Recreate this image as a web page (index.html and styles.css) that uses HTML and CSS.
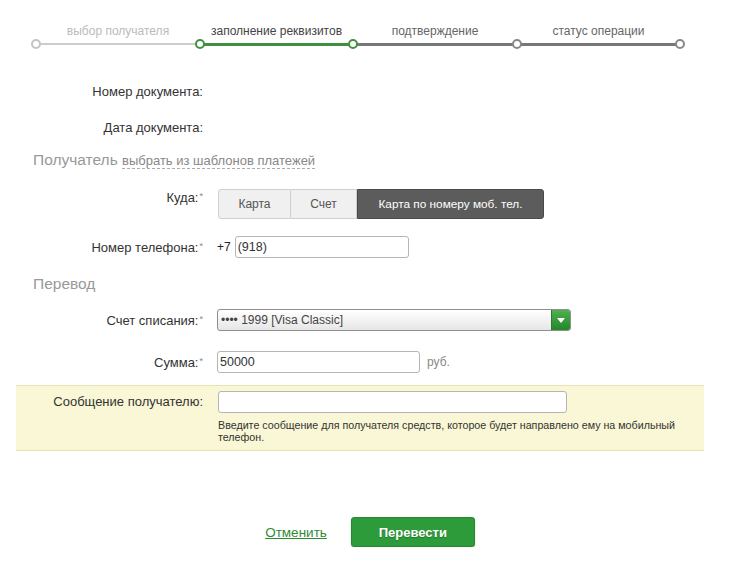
FILE: index.html
```html
<!DOCTYPE html>
<html lang="ru">
<head>
  <meta charset="UTF-8" />
  <title>Перевод по номеру телефона</title>
  <link rel="stylesheet" href="styles.css">
</head>
<body>
  <div class="steps">
    <div class="step done">
      <div class="step-name">выбор получателя</div>
      <div class="track"><span class="dot"></span></div>
    </div>
    <div class="step current">
      <div class="step-name">заполнение реквизитов</div>
      <div class="track"><span class="dot"></span></div>
    </div>
    <div class="step">
      <div class="step-name">подтверждение</div>
      <div class="track"><span class="dot green"></span></div>
    </div>
    <div class="step last">
      <div class="step-name">статус операции</div>
      <div class="track"><span class="dot"></span><span class="dot end"></span></div>
    </div>
  </div>

  <div class="form">
    <div class="row row-doc">
      <div class="label">Номер документа:</div>
    </div>
    <div class="row row-date">
      <div class="label">Дата документа:</div>
    </div>

    <div class="section section-recipient">
      Получатель <a class="templates" href="#">выбрать из шаблонов платежей</a>
    </div>

    <div class="row row-where">
      <div class="label">Куда:<sup>*</sup></div>
      <div class="field">
        <div class="switch">
          <span class="opt opt-card">Карта</span>
          <span class="opt opt-acc">Счет</span>
          <span class="opt opt-phone active">Карта по номеру моб. тел.</span>
        </div>
      </div>
    </div>

    <div class="row row-phone">
      <div class="label">Номер телефона:<sup>*</sup></div>
      <div class="field">
        <span class="prefix">+7</span>
        <div class="input input-phone">(918)</div>
      </div>
    </div>

    <div class="section section-transfer">Перевод</div>

    <div class="row row-account">
      <div class="label">Счет списания:<sup>*</sup></div>
      <div class="field">
        <div class="select">
          <span class="select-text">•••• 1999 [Visa Classic]</span>
          <span class="select-btn">
            <svg width="10" height="7" viewBox="0 0 10 7"><path d="M1 1h8L5 6z" fill="#fff"/></svg>
          </span>
        </div>
      </div>
    </div>

    <div class="row row-sum">
      <div class="label">Сумма:<sup>*</sup></div>
      <div class="field">
        <div class="input input-sum">50000</div>
        <span class="currency">руб.</span>
      </div>
    </div>

    <div class="message-box">
      <div class="row">
        <div class="label">Сообщение получателю:</div>
        <div class="field field-col">
          <div class="input input-msg"></div>
          <div class="hint">Введите сообщение для получателя средств, которое будет направлено ему на мобильный телефон.</div>
        </div>
      </div>
    </div>

    <div class="actions">
      <a class="cancel" href="#">Отменить</a>
      <button class="submit">Перевести</button>
    </div>
  </div>
</body>
</html>
```

FILE: styles.css
```css
body {
  margin: 0;
  padding: 0;
  font-family: 'Liberation Sans', Arial, sans-serif;
  font-size: 12px;
  color: #333;
  background: #fff;
}

/* progress */
.steps {
  display: grid;
  grid-template-columns: 164px 153px 164px 163px;
  margin-left: 36px;
  padding-top: 24px;
}

.step-name {
  height: 14px;
  line-height: 14px;
  text-align: center;
  color: #666;
  font-size: 12px;
}

.step.done .step-name {
  color: #bbb;
}

.step.current .step-name {
  color: #444;
}

.track {
  position: relative;
  height: 12px;
}

.track::before {
  content: "";
  position: absolute;
  left: 0;
  right: 0;
  top: 5px;
  height: 3px;
  background: #777;
}

.step.done .track::before {
  height: 2px;
  top: 5px;
  background: #ccc;
}

.step.current .track::before {
  background: #3f9140;
}

.dot {
  position: absolute;
  left: -5px;
  top: 1px;
  width: 6px;
  height: 6px;
  border: 2px solid #888;
  border-radius: 50%;
  background: #fff;
  z-index: 1;
}

.step.done .dot {
  border-color: #c4c4c4;
}

.step.current .dot,
.dot.green {
  border-color: #3f9140;
}

.dot.end {
  left: auto;
  right: -5px;
}

/* form */
.form {
  margin-top: 30px;
}

.row {
  display: flex;
  align-items: center;
  height: 22px;
}

.label {
  width: 203px;
  flex-shrink: 0;
  text-align: right;
  color: #333;
  font-size: 13px;
}

.label sup {
  font-size: 9px;
  color: #888;
  vertical-align: 3px;
  margin-left: 1px;
}

.field {
  display: flex;
  align-items: center;
  margin-left: 14px;
}

.row-date {
  margin-top: 14px;
}

.section {
  height: 22px;
  line-height: 22px;
  padding-left: 33px;
  font-size: 15.5px;
  color: #999;
}

.section-recipient {
  margin-top: 11px;
}

.templates {
  font-size: 13px;
  color: #888;
  text-decoration: none;
  border-bottom: 1px dashed #aaa;
}

.row-where {
  margin-top: 18px;
  height: 30px;
  align-items: flex-start;
}

.row-where .label {
  line-height: 14px;
}

.row-where .field {
  margin-left: 15px;
}

.switch {
  display: flex;
  height: 30px;
}

.opt {
  display: flex;
  align-items: center;
  justify-content: center;
  height: 28px;
  background: #f0f0f0;
  border: 1px solid #cfcfcf;
  color: #555;
}

.opt-card {
  width: 71px;
  border-radius: 3px 0 0 3px;
}

.opt-acc {
  width: 65px;
  border-left: none;
}

.opt.active {
  width: 185px;
  background: #5c5c5c;
  border-color: #4a4a4a;
  color: #fff;
  font-size: 11.8px;
  border-radius: 0 3px 3px 0;
}

.row-phone {
  margin-top: 17px;
}

.prefix {
  color: #222;
  margin-right: 4px;
}

.input {
  box-sizing: border-box;
  height: 22px;
  line-height: 20px;
  padding: 0 2px;
  border: 1px solid #b5b5b5;
  border-radius: 3px;
  background: #fff;
  color: #333;
  font-size: 12.5px;
}

.input-phone {
  width: 174px;
}

.section-transfer {
  margin-top: 15px;
}

.row-account {
  margin-top: 14px;
}

.select {
  box-sizing: border-box;
  display: flex;
  width: 354px;
  height: 22px;
  border: 1px solid #8f8f8f;
  border-radius: 3px;
  background: linear-gradient(#fff, #e6e6e6);
  overflow: hidden;
}

.select-text {
  flex: 1;
  line-height: 20px;
  padding-left: 3px;
  color: #444;
}

.select-btn {
  display: flex;
  align-items: center;
  justify-content: center;
  width: 18px;
  background: linear-gradient(#4fb04f, #23862a);
  border-left: 1px solid #2a7a2a;
}

.row-sum {
  margin-top: 20px;
}

.input-sum {
  width: 203px;
}

.currency {
  margin-left: 7px;
  color: #888;
}

.message-box {
  box-sizing: border-box;
  margin: 12px 30px 0 16px;
  height: 66px;
  padding-top: 5px;
  background: #f9f7d5;
  border-top: 1px solid #e6e3b4;
  border-bottom: 1px solid #e6e3b4;
}

.message-box .row {
  align-items: flex-start;
  height: auto;
}

.message-box .label {
  width: 187px;
  line-height: 14px;
  margin-top: 4px;
}

.field-col {
  flex-direction: column;
  align-items: flex-start;
  margin-left: 15px;
}

.input-msg {
  width: 349px;
}

.hint {
  width: 475px;
  margin-top: 6px;
  font-size: 10.7px;
  line-height: 12px;
  color: #333;
}

.actions {
  display: flex;
  justify-content: center;
  align-items: center;
  gap: 24px;
  margin-top: 66px;
  padding-left: 6px;
}

.cancel {
  font-size: 13.5px;
  color: #2f8a35;
  text-decoration: underline;
}

.submit {
  width: 124px;
  height: 30px;
  border: 1px solid #238a2d;
  border-radius: 3px;
  background: #2e9b3a;
  color: #fff;
  font-family: 'Liberation Sans', Arial, sans-serif;
  font-size: 13px;
  font-weight: bold;
  text-shadow: 0 1px 1px rgba(0, 0, 0, 0.25);
  box-shadow: 0 1px 2px rgba(0, 0, 0, 0.2);
}
```
